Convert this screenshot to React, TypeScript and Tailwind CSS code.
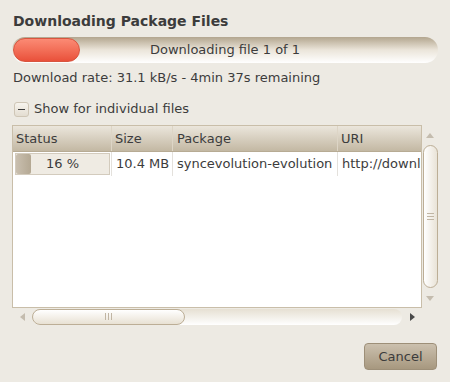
export default function App() {
  const font = { fontFamily: '"DejaVu Sans", sans-serif' };
  return (
    <div
      className="w-[450px] h-[382px] bg-[#edeae3] text-[#3c3c3c] overflow-hidden flex flex-col px-3"
      style={font}
    >
      {/* Title */}
      <div className="pt-[11px] h-[37px] text-[14px] font-bold leading-[20px] pl-px">
        Downloading Package Files
      </div>

      {/* Overall progress */}
      <div className="relative h-[26px] w-[426px] rounded-full bg-gradient-to-b from-[#b3a68f] via-[#ebe5da] to-white">
        <div className="absolute left-[1px] top-[1px] h-[24px] w-[67px] rounded-full border border-[#d8553f] bg-gradient-to-b from-[#fb8a74] to-[#e9503a]" />
        <div className="absolute inset-0 flex items-center justify-center text-[13px]">
          Downloading file 1 of 1
        </div>
      </div>

      <div className="mt-[6px] h-[18px] text-[13px] leading-[18px] pl-px">
        Download rate: 31.1 kB/s - 4min 37s remaining
      </div>

      {/* Expander */}
      <div className="mt-[13px] h-[18px] flex items-center gap-[5px] pl-[2px] text-[13px]">
        <div className="w-[15px] h-[15px] rounded-[3px] border border-[#cfc6b6] bg-gradient-to-b from-[#f7f4ee] to-[#e3ddd1] flex items-center justify-center">
          <div className="w-[7px] h-[1px] bg-[#3c3c3c]" />
        </div>
        <span>Show for individual files</span>
      </div>

      {/* Table + vertical scrollbar */}
      <div className="mt-[7px] flex">
        <div className="w-[410px] h-[183px] border border-[#c9bea9] bg-white flex flex-col">
          <div className="h-[26px] flex text-[13px] bg-gradient-to-b from-[#ebe6dc] to-[#c3b8a3] border-b border-[#b7ab94]">
            <div className="w-[99px] pl-[3px] flex items-center border-r border-[#ddd5c6]">Status</div>
            <div className="w-[61px] pl-[3px] flex items-center border-r border-[#ddd5c6]">Size</div>
            <div className="w-[165px] pl-[4px] flex items-center border-r border-[#ddd5c6]">Package</div>
            <div className="flex-1 pl-[3px] flex items-center">URI</div>
          </div>
          <div className="h-[24px] flex text-[13px] whitespace-nowrap overflow-hidden">
            <div className="w-[99px] pl-[2px] pr-[1px] py-[1px] border-r border-[#e4e1dc]">
              <div className="relative h-full border border-[#d3cbbd] bg-[#efebe3]">
                <div className="absolute left-0 top-0 bottom-0 w-[15px] rounded-[2px] bg-gradient-to-r from-[#c9bfaf] to-[#b4a893]" />
                <div className="absolute inset-0 flex items-center justify-center">16 %</div>
              </div>
            </div>
            <div className="w-[61px] pl-[4px] flex items-center border-r border-[#e4e1dc]">10.4 MB</div>
            <div className="w-[165px] pl-[4px] flex items-center border-r border-[#e4e1dc] overflow-hidden">
              syncevolution-evolution
            </div>
            <div className="flex-1 pl-[4px] flex items-center overflow-hidden">http://downl</div>
          </div>
        </div>

        {/* Vertical scrollbar */}
        <div className="w-[16px] h-[183px] flex flex-col items-center">
          <div className="h-[20px] flex items-center justify-center">
            <div className="w-0 h-0 border-l-[4px] border-r-[4px] border-b-[5px] border-l-transparent border-r-transparent border-b-[#c4bcae]" />
          </div>
          <div className="w-[15px] h-[143px] rounded-full border border-[#bcae96] bg-gradient-to-r from-white to-[#e9e3d7] flex flex-col items-center justify-center gap-[2px]">
            <div className="w-[7px] h-px bg-[#c0b5a3]" />
            <div className="w-[7px] h-px bg-[#c0b5a3]" />
            <div className="w-[7px] h-px bg-[#c0b5a3]" />
          </div>
          <div className="h-[20px] flex items-center justify-center">
            <div className="w-0 h-0 border-l-[4px] border-r-[4px] border-t-[5px] border-l-transparent border-r-transparent border-t-[#c4bcae]" />
          </div>
        </div>
      </div>

      {/* Horizontal scrollbar */}
      <div className="h-[17px] w-[410px] flex items-center">
        <div className="w-[20px] flex justify-center">
          <div className="w-0 h-0 border-t-[4px] border-b-[4px] border-r-[5px] border-t-transparent border-b-transparent border-r-[#c4bcae]" />
        </div>
        <div className="relative w-[370px] h-[16px] rounded-full bg-gradient-to-b from-[#e6e0d3] to-white">
          <div className="absolute left-0 top-0 w-[153px] h-[16px] rounded-full border border-[#bcae96] bg-gradient-to-b from-white to-[#e8e1d3] flex items-center justify-center gap-[2px]">
            <div className="w-px h-[7px] bg-[#c0b5a3]" />
            <div className="w-px h-[7px] bg-[#c0b5a3]" />
            <div className="w-px h-[7px] bg-[#c0b5a3]" />
          </div>
        </div>
        <div className="w-[20px] flex justify-center">
          <div className="w-0 h-0 border-t-[4px] border-b-[4px] border-l-[5px] border-t-transparent border-b-transparent border-l-[#4a4a4a]" />
        </div>
      </div>

      {/* Buttons */}
      <div className="mt-[18px] flex justify-end pr-px">
        <button className="w-[73px] h-[27px] rounded-[4px] border border-[#9d8f78] bg-gradient-to-b from-[#cbc0ae] to-[#a7987f] text-[13px] text-[#3c3c3c]">
          Cancel
        </button>
      </div>
    </div>
  );
}
